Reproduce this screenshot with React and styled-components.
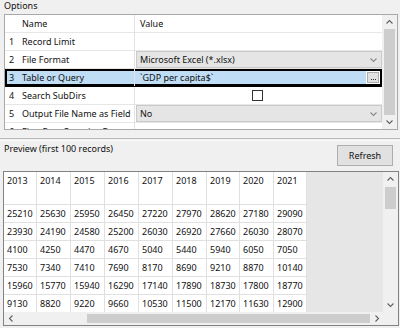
import styled, { createGlobalStyle } from "styled-components";

const GlobalStyle = createGlobalStyle`
  html, body { margin: 0; padding: 0; }
  body {
    width: 400px;
    height: 328px;
    overflow: hidden;
    background: #f0f0f0;
    font-family: "Noto Sans", "Open Sans", sans-serif;
    font-size: 9px;
    color: #111;
  }
`;

const years = [2013, 2014, 2015, 2016, 2017, 2018, 2019, 2020, 2021];
const colWidths = [33, 34, 34, 34, 34, 34, 33, 34, 33];
const rows = [
  [25210, 25630, 25950, 26450, 27220, 27970, 28620, 27180, 29090],
  [23930, 24190, 24580, 25200, 26030, 26920, 27660, 26030, 28070],
  [4100, 4250, 4470, 4670, 5040, 5440, 5940, 6050, 7050],
  [7530, 7340, 7410, 7690, 8170, 8690, 9210, 8870, 10140],
  [15960, 15770, 15940, 16290, 17140, 17890, 18730, 17800, 18770],
  [9130, 8820, 9220, 9660, 10530, 11500, 12170, 11630, 12900],
];

const Chevron = ({ dir = "down", color = "#606060" }) => {
  const pts = {
    up: "0.5,4.5 3.5,1.5 6.5,4.5",
    down: "0.5,1.5 3.5,4.5 6.5,1.5",
    left: "4.5,0.5 1.5,3.5 4.5,6.5",
    right: "1.5,0.5 4.5,3.5 1.5,6.5",
  }[dir];
  const horiz = dir === "left" || dir === "right";
  return (
    <svg width={horiz ? 6 : 7} height={horiz ? 7 : 6} viewBox={horiz ? "0 0 6 7" : "0 0 7 6"}>
      <polyline points={pts} fill="none" stroke={color} strokeWidth="1.1" />
    </svg>
  );
};

const Page = styled.div`
  display: flex;
  flex-direction: column;
  width: 400px;
  height: 328px;
`;

const SectionLabel = styled.div`
  height: 14px;
  line-height: 12px;
  padding-left: 4px;
`;

const PropGrid = styled.div`
  box-sizing: border-box;
  margin-left: 4px;
  width: 394px;
  height: 116px;
  border: 1px solid #a9a9a9;
  display: flex;
  overflow: hidden;
`;

const PropList = styled.div`
  flex: 1;
  background: #fff;
  overflow: hidden;
`;

const PropRow = styled.div`
  box-sizing: border-box;
  height: 18px;
  display: grid;
  grid-template-columns: 16px 114px 1fr;
  border-bottom: 1px solid #e6e6e6;
  background: ${(p) => (p.$selected ? "#bfddf5" : "#fff")};
  box-shadow: ${(p) => (p.$selected ? "inset 0 0 0 2px #000" : "none")};
  ${(p) => p.$selected && "border-bottom-color: #000;"}
`;

const RowNum = styled.div`
  padding-left: 4px;
  display: flex;
  align-items: center;
`;

const NameCell = styled.div`
  display: flex;
  align-items: center;
  padding-left: 1px;
  border-right: 1px solid #e2e2e2;
  white-space: nowrap;
  overflow: hidden;
`;

const ValueCell = styled.div`
  display: flex;
  align-items: center;
  justify-content: ${(p) => (p.$center ? "center" : "flex-start")};
  padding-left: ${(p) => (p.$center ? "0" : "5px")};
  padding-right: 2px;
  white-space: nowrap;
  overflow: hidden;
`;

const Combo = styled.div`
  box-sizing: border-box;
  margin-left: 1px;
  height: 100%;
  background: #e5e5e5;
  border: 1px solid #cacaca;
  display: flex;
  align-items: center;
  justify-content: space-between;
  padding: 0 4px 0 3px;
  white-space: nowrap;
`;

const CheckBox = styled.span`
  box-sizing: border-box;
  display: block;
  width: 11px;
  height: 11px;
  border: 1px solid #333;
  background: #fff;
  margin-top: ${(p) => (p.$low ? "10px" : "0")};
`;

const EllipsisButton = styled.span`
  box-sizing: border-box;
  margin-left: auto;
  width: 14px;
  height: 13px;
  background: #e1e1e1;
  border: 1px solid #fff;
  outline: 1px solid #adadad;
  outline-offset: -2px;
  display: flex;
  align-items: flex-end;
  justify-content: center;
  gap: 1px;
  padding-bottom: 3px;
`;

const Dot = styled.span`
  width: 1px;
  height: 1px;
  background: #333;
`;

const VScroll = styled.div`
  width: 15px;
  display: flex;
  flex-direction: column;
  background: #f0f0f0;
`;

const ScrollArrow = styled.div`
  height: 14px;
  flex-shrink: 0;
  display: flex;
  align-items: center;
  justify-content: center;
`;

const ScrollTrack = styled.div`
  flex: 1;
  display: flex;
  flex-direction: column;
  padding: 0 2px;
`;

const ScrollThumb = styled.div`
  background: #cdcdcd;
  height: ${(p) => (p.$h ? `${p.$h}px` : "100%")};
  margin-top: ${(p) => p.$top || 0}px;
`;

const Splitter = styled.div`
  margin-top: 8px;
  height: 1px;
  border-top: 1px solid #b9b9b9;
  border-bottom: 1px solid #fbfbfb;
`;

const PreviewBar = styled.div`
  height: 30px;
  display: flex;
  justify-content: space-between;
  align-items: flex-start;
  padding: 0 7px 0 4px;
`;

const PreviewLabel = styled.div`
  padding-top: 2px;
  line-height: 12px;
`;

const RefreshButton = styled.button`
  box-sizing: border-box;
  margin-top: 4px;
  width: 56px;
  height: 21px;
  background: #e1e1e1;
  border: 1px solid #adadad;
  font: inherit;
  color: #111;
  padding: 0;
`;

const DataGrid = styled.div`
  box-sizing: border-box;
  margin-left: 3px;
  width: 396px;
  height: 155px;
  border: 1px solid #828282;
  display: flex;
  flex-direction: column;
`;

const DataBody = styled.div`
  height: 140px;
  display: flex;
`;

const DataArea = styled.div`
  flex: 1;
  background: #e6e6e6;
  overflow: hidden;
`;

const DataTable = styled.div`
  display: inline-flex;
  flex-direction: column;
  background: #fff;
`;

const DataRow = styled.div`
  display: flex;
  height: ${(p) => (p.$header ? 33 : 18)}px;
  align-items: ${(p) => (p.$header ? "flex-start" : "center")};
  box-sizing: border-box;
  border-bottom: 1px solid #e0e0e0;
`;

const DataCell = styled.div`
  box-sizing: border-box;
  width: ${(p) => p.$w}px;
  height: 100%;
  padding: ${(p) => (p.$header ? "3px" : "0")} 0 0 3px;
  border-right: 1px solid #e0e0e0;
  display: flex;
  align-items: ${(p) => (p.$header ? "flex-start" : "center")};
  line-height: 12px;
`;

const HScrollRow = styled.div`
  height: 13px;
  display: flex;
`;

const HScroll = styled.div`
  flex: 1;
  display: flex;
  background: #f0f0f0;
`;

const HArrow = styled.div`
  width: 13px;
  display: flex;
  align-items: center;
  justify-content: center;
`;

const HTrack = styled.div`
  flex: 1;
  display: flex;
  padding: 2px 0;
`;

const HThumb = styled.div`
  margin-left: 70px;
  flex: 1;
  background: #cdcdcd;
`;

const Corner = styled.div`
  width: 15px;
  background: #f0f0f0;
`;

export default function App() {
  return (
    <Page>
      <GlobalStyle />
      <SectionLabel>Options</SectionLabel>
      <PropGrid>
        <PropList>
          <PropRow>
            <RowNum />
            <NameCell>Name</NameCell>
            <ValueCell>Value</ValueCell>
          </PropRow>
          <PropRow>
            <RowNum>1</RowNum>
            <NameCell>Record Limit</NameCell>
            <ValueCell />
          </PropRow>
          <PropRow>
            <RowNum>2</RowNum>
            <NameCell>File Format</NameCell>
            <Combo>
              <span>Microsoft Excel (*.xlsx)</span>
              <Chevron dir="down" color="#8a8a8a" />
            </Combo>
          </PropRow>
          <PropRow $selected>
            <RowNum>3</RowNum>
            <NameCell>Table or Query</NameCell>
            <ValueCell>
              `GDP per capita$`
              <EllipsisButton>
                <Dot />
                <Dot />
                <Dot />
              </EllipsisButton>
            </ValueCell>
          </PropRow>
          <PropRow>
            <RowNum>4</RowNum>
            <NameCell>Search SubDirs</NameCell>
            <ValueCell $center>
              <CheckBox />
            </ValueCell>
          </PropRow>
          <PropRow>
            <RowNum>5</RowNum>
            <NameCell>Output File Name as Field</NameCell>
            <Combo>
              <span>No</span>
              <Chevron dir="down" color="#8a8a8a" />
            </Combo>
          </PropRow>
          <PropRow>
            <RowNum>6</RowNum>
            <NameCell>First Row Contains Data</NameCell>
            <ValueCell $center>
              <CheckBox $low />
            </ValueCell>
          </PropRow>
        </PropList>
        <VScroll>
          <ScrollArrow>
            <Chevron dir="up" />
          </ScrollArrow>
          <ScrollTrack>
            <ScrollThumb />
          </ScrollTrack>
          <ScrollArrow>
            <Chevron dir="down" />
          </ScrollArrow>
        </VScroll>
      </PropGrid>

      <Splitter />
      <PreviewBar>
        <PreviewLabel>Preview (first 100 records)</PreviewLabel>
        <RefreshButton>Refresh</RefreshButton>
      </PreviewBar>

      <DataGrid>
        <DataBody>
          <DataArea>
            <DataTable>
              <DataRow $header>
                {years.map((y, i) => (
                  <DataCell key={y} $w={colWidths[i]} $header>
                    {y}
                  </DataCell>
                ))}
              </DataRow>
              {rows.map((r, ri) => (
                <DataRow key={ri}>
                  {r.map((v, i) => (
                    <DataCell key={i} $w={colWidths[i]}>
                      {v}
                    </DataCell>
                  ))}
                </DataRow>
              ))}
            </DataTable>
          </DataArea>
          <VScroll>
            <ScrollArrow>
              <Chevron dir="up" />
            </ScrollArrow>
            <ScrollTrack>
              <ScrollThumb $h={22} $top={1} />
            </ScrollTrack>
            <ScrollArrow>
              <Chevron dir="down" />
            </ScrollArrow>
          </VScroll>
        </DataBody>
        <HScrollRow>
          <HScroll>
            <HArrow>
              <Chevron dir="left" />
            </HArrow>
            <HTrack>
              <HThumb />
            </HTrack>
            <HArrow>
              <Chevron dir="right" />
            </HArrow>
          </HScroll>
          <Corner />
        </HScrollRow>
      </DataGrid>
    </Page>
  );
}
